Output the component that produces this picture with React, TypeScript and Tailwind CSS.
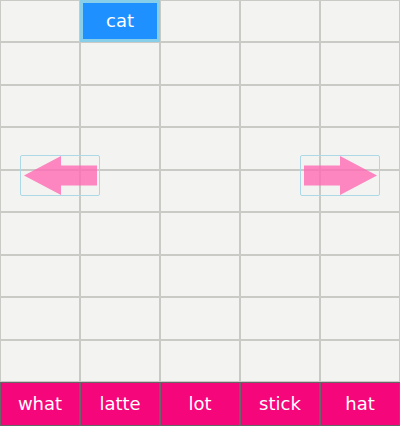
import React from "react";

const rows = 9;
const cols = 5;
const bottom = ["what", "latte", "lot", "stick", "hat"];

export default function App() {
  return (
    <div
      className="relative w-[400px] h-[426px] flex flex-col bg-[#f3f4f1]"
      style={{ fontFamily: "'DejaVu Sans', 'Liberation Sans', sans-serif" }}
    >
      <div className="h-[382px] flex flex-col">
        {Array.from({ length: rows }).map((_, r) => (
          <div key={r} className="flex-1 flex">
            {Array.from({ length: cols }).map((_, c) =>
              r === 0 && c === 1 ? (
                <div
                  key={c}
                  className="w-[80px] h-full border-[3px] border-[#87ceeb] bg-[#1e90ff] flex items-center justify-center text-white text-[18px] leading-none"
                >
                  cat
                </div>
              ) : (
                <div
                  key={c}
                  className="w-[80px] h-full border border-[#c9cac6] bg-[#f3f4f1]"
                />
              )
            )}
          </div>
        ))}
      </div>
      <div className="h-[44px] flex">
        {bottom.map((w) => (
          <div
            key={w}
            className="w-[80px] h-full border border-[#666666] bg-[#f5067b] flex items-center justify-center text-white text-[18px] leading-none"
          >
            {w}
          </div>
        ))}
      </div>

      <div className="absolute left-[20px] top-[155px] w-[80px] h-[41px] border border-[#add8e6] rounded-[2px]">
        <svg width="78" height="39" viewBox="0 0 78 39" className="block">
          <polygon
            points="3,19.5 40,0 40,9.5 76,9.5 76,29.5 40,29.5 40,39"
            fill="#ff69b4"
            fillOpacity="0.8"
          />
        </svg>
      </div>
      <div className="absolute left-[300px] top-[155px] w-[80px] h-[41px] border border-[#add8e6] rounded-[2px]">
        <svg width="78" height="39" viewBox="0 0 78 39" className="block">
          <polygon
            points="3,9.5 39,9.5 39,0 76,19.5 39,39 39,29.5 3,29.5"
            fill="#ff69b4"
            fillOpacity="0.8"
          />
        </svg>
      </div>
    </div>
  );
}
